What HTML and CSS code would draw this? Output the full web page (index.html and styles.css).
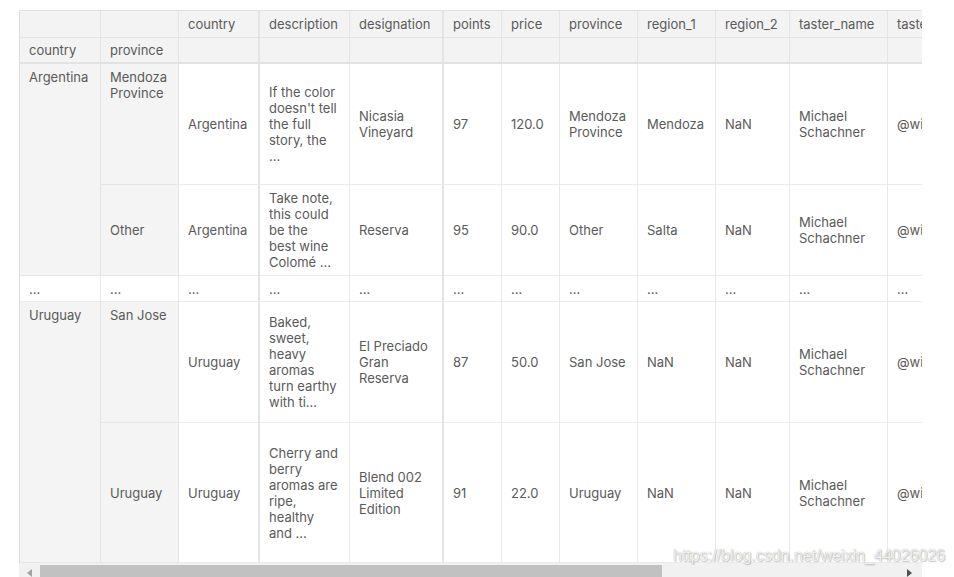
FILE: index.html
```html
<!DOCTYPE html>
<html>
<head>
<meta charset="utf-8">
<link rel="stylesheet" href="styles.css">
</head>
<body>
<div class="frame">
  <div class="clip">
    <table class="df">
      <colgroup>
        <col class="w81"><col class="w78"><col class="w81"><col class="w90"><col class="w94"><col class="w58"><col class="w58"><col class="w78"><col class="w78"><col class="w74"><col class="w98"><col class="w150">
      </colgroup>
      <thead>
        <tr class="h1">
          <th></th><th></th><th class="b2">country</th><th>description</th><th class="b2">designation</th><th>points</th><th>price</th><th>province</th><th>region_1</th><th>region_2</th><th>taster_name</th><th>taster_twitter_handle</th>
        </tr>
        <tr class="h2">
          <th>country</th><th>province</th><th class="b2"></th><th></th><th class="b2"></th><th></th><th></th><th></th><th></th><th></th><th></th><th></th>
        </tr>
      </thead>
      <tbody>
        <tr class="r1">
          <th rowspan="2" class="idx top">Argentina</th>
          <th class="idx top">Mendoza<br>Province</th>
          <td class="b2">Argentina</td>
          <td class="desc">If the color<br>doesn't tell<br>the full<br>story, the<br>...</td>
          <td class="b2">Nicasia<br>Vineyard</td>
          <td>97</td><td>120.0</td><td>Mendoza<br>Province</td><td>Mendoza</td><td>NaN</td><td>Michael<br>Schachner</td><td>@wineschach</td>
        </tr>
        <tr class="r2">
          <th class="idx">Other</th>
          <td class="b2">Argentina</td>
          <td class="desc">Take note,<br>this could<br>be the<br>best wine<br>Colomé ...</td>
          <td class="b2">Reserva</td>
          <td>95</td><td>90.0</td><td>Other</td><td>Salta</td><td>NaN</td><td>Michael<br>Schachner</td><td>@wineschach</td>
        </tr>
        <tr class="re">
          <th class="dots">...</th><th class="dots">...</th><td class="b2">...</td><td>...</td><td class="b2">...</td><td>...</td><td>...</td><td>...</td><td>...</td><td>...</td><td>...</td><td>...</td>
        </tr>
        <tr class="r1">
          <th rowspan="2" class="idx top">Uruguay</th>
          <th class="idx top">San Jose</th>
          <td class="b2">Uruguay</td>
          <td class="desc">Baked,<br>sweet,<br>heavy<br>aromas<br>turn earthy<br>with ti...</td>
          <td class="b2">El Preciado<br>Gran<br>Reserva</td>
          <td>87</td><td>50.0</td><td>San Jose</td><td>NaN</td><td>NaN</td><td>Michael<br>Schachner</td><td>@wineschach</td>
        </tr>
        <tr class="r4">
          <th class="idx">Uruguay</th>
          <td class="b2">Uruguay</td>
          <td class="desc">Cherry and<br>berry<br>aromas are<br>ripe,<br>healthy<br>and ...</td>
          <td class="b2">Blend 002<br>Limited<br>Edition</td>
          <td>91</td><td>22.0</td><td>Uruguay</td><td>NaN</td><td>NaN</td><td>Michael<br>Schachner</td><td>@wineschach</td>
        </tr>
      </tbody>
    </table>
  </div>
  <div class="hscroll">
    <div class="sbtn left"><svg width="5" height="8" viewBox="0 0 5 8"><path d="M5 0 L0 4 L5 8 Z" fill="#a3a3a3"/></svg></div>
    <div class="track"><div class="thumb"></div></div>
    <div class="sbtn right"><svg width="5" height="8" viewBox="0 0 5 8"><path d="M0 0 L5 4 L0 8 Z" fill="#505050"/></svg></div>
  </div>
</div>
<div class="watermark">https://blog.csdn.net/weixin_44026026</div>
</body>
</html>
```

FILE: styles.css
```css
html, body {
  margin: 0;
  padding: 0;
  background: #ffffff;
  overflow: hidden;
}

body {
  width: 954px;
  height: 577px;
}

.frame {
  margin: 10px 0 0 19px;
  width: 903px;
}

.clip {
  width: 903px;
  overflow: hidden;
}

.df {
  border-collapse: separate;
  border-spacing: 0;
  table-layout: fixed;
  width: 1019px;
  border-left: 1px solid #dedede;
  border-top: 1px solid #e2e2e2;
  font-family: "Inter", "Noto Sans", sans-serif;
  font-size: 13px;
  line-height: 16px;
  color: #5a5a5a;
}

.w81 { width: 81px; }
.w78 { width: 78px; }
.w90 { width: 90px; }
.w94 { width: 94px; }
.w58 { width: 58px; }
.w74 { width: 74px; }
.w98 { width: 98px; }
.w150 { width: 150px; }

.df th,
.df td {
  padding: 5px 9px;
  border-right: 1px solid #e9e9e9;
  border-bottom: 1px solid #ebebeb;
  text-align: left;
  font-weight: normal;
  vertical-align: middle;
  white-space: nowrap;
  overflow: hidden;
}

.df thead th {
  background: #f3f3f3;
  border-right-color: #e4e4e4;
  border-bottom-color: #e4e4e4;
}

.df .h1 { height: 25px; }
.df .h2 { height: 24px; }
.df .h2 th {
  border-bottom: 2px solid #e2e2e2;
  padding-top: 4px;
  padding-bottom: 4px;
}

.df .b2 { border-right: 2px solid #e4e4e4; }

.df tbody .idx {
  background: #f4f4f4;
  border-right-color: #e4e4e4;
  border-bottom-color: #e6e6e6;
}

.df tbody .top {
  vertical-align: top;
}

.df tbody .dots {
  background: #ffffff;
}

.df .r1 { height: 121px; }
.df .r2 { height: 89px; }
.df .re { height: 25px; }
.df .re th,
.df .re td {
  padding-top: 5px;
  padding-bottom: 4px;
}
.df .r4 { height: 140px; }

.hscroll {
  display: flex;
  height: 17px;
  background: #f1f1f1;
}

.sbtn {
  display: flex;
  align-items: flex-start;
  justify-content: center;
  padding-top: 6px;
  box-sizing: border-box;
}

.sbtn.left {
  width: 21px;
}

.sbtn.right {
  width: 22px;
  padding-right: 4px;
}

.track {
  flex: 1;
  padding-top: 2px;
}

.thumb {
  width: 622px;
  height: 13px;
  background: #c1c1c1;
}

.watermark {
  position: absolute;
  left: 673px;
  top: 547px;
  font-family: "Liberation Sans", Arial, sans-serif;
  font-size: 16px;
  color: rgba(255, 255, 255, 0.85);
  text-shadow: 0 0 1px rgba(90, 90, 90, 0.55), 1px 1px 1px rgba(120, 120, 120, 0.35);
  white-space: nowrap;
}
```
